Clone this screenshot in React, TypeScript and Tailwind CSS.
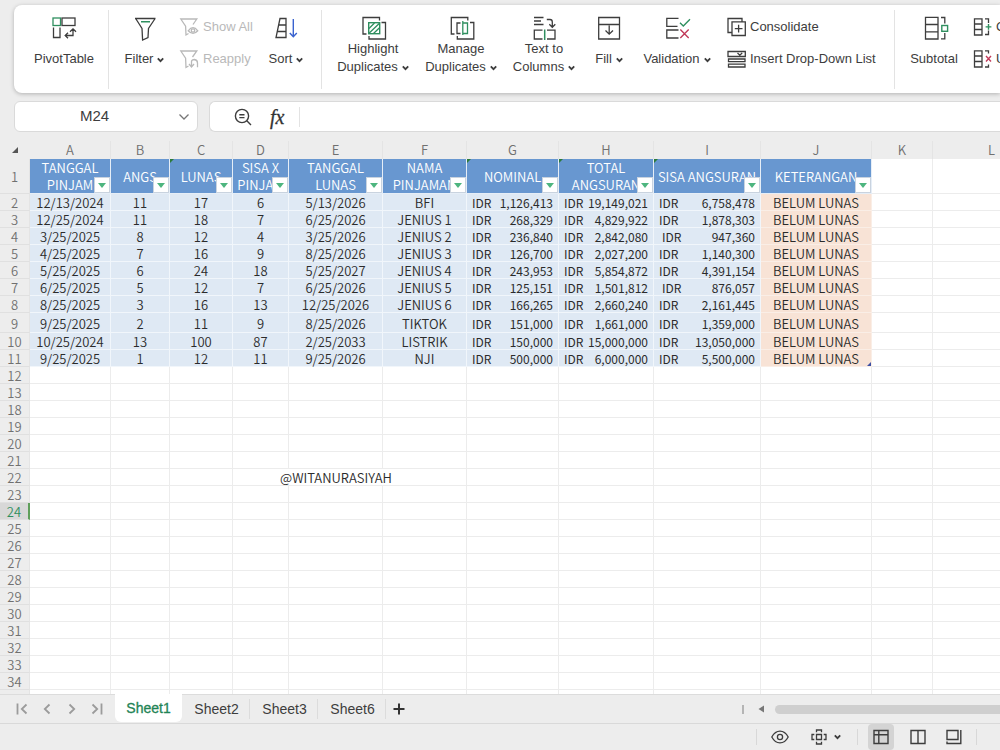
import type { ReactNode } from "react";

const INK = "#3d3d3d";
const GREEN = "#2f8f5f";
const RED = "#c23b5a";

function Icon({ size = 24, children, color = INK }: { size?: number; children: ReactNode; color?: string }) {
  return (
    <svg
      width={size}
      height={size}
      viewBox={`0 0 ${size} ${size}`}
      fill="none"
      stroke={color}
      strokeWidth="1.3"
      className="shrink-0 overflow-visible"
      aria-hidden="true"
    >
      {children}
    </svg>
  );
}

function Caret() {
  return (
    <svg width="7" height="6" viewBox="0 0 7 6" fill="none" stroke={INK} strokeWidth="1.8" className="ml-1 inline-block" aria-hidden="true">
      <path d="M0.8 1.4 3.5 4.2 6.2 1.4" />
    </svg>
  );
}

const PivotIcon = (
  <Icon>
    <rect x="1" y="2" width="7.5" height="7.5" stroke={GREEN} />
    <rect x="10" y="2" width="13" height="7.5" />
    <path d="M1.5 11.5V21.5H8V11.5M21 13.2V19.5H13.5M18 15.8 21 12.8 24 15.8M16 16.8 13.2 19.5 16 22.2" />
  </Icon>
);
const FilterIcon = (
  <Icon>
    <path d="M2 2.5H22.5M3 3 9 12.5 9.6 24 15 21.6 15.5 12.5 21.8 3" />
    <path d="M8 5.8H17" stroke={GREEN} strokeWidth="1.5" />
  </Icon>
);
const ShowAllIcon = (
  <Icon size={20} color="#b9b9b9">
    <path d="M8.5 16.5 6 18 5.6 9.2 0.8 2H16.8L13 7.5" />
    <path d="M8.2 13.8Q13 7.6 17.8 13.8 13 19 8.2 13.8Z" />
    <circle cx="13" cy="13.5" r="1.7" />
  </Icon>
);
const ReapplyIcon = (
  <Icon size={20} color="#b9b9b9">
    <path d="M8.5 17 6 18.5 5.6 9.2 0.8 2H16.8L12.5 8" />
    <path d="M11.5 17.8V12.5Q11.8 10.5 14.5 10.5 17.5 11 17.5 14V18.2M9 15 11.5 18 14 15" />
  </Icon>
);
const SortIcon = (
  <Icon>
    <path d="M6 2.5H12V21.5H2ZM5 9H12M3.5 15.5H12" />
    <path d="M19.3 3V20.5M15.8 17 19.3 20.8 22.8 17" stroke="#3a63cf" strokeWidth="1.4" />
  </Icon>
);
const HighlightIcon = (
  <Icon>
    <path d="M5.5 18H2V1.5H18.5V4.5M20.5 6.5H24.5V23H8V20" />
    <rect x="7.7" y="6.7" width="11" height="11" stroke={GREEN} strokeWidth="1.4" />
    <path d="M8 12.5 13.5 7M8 17.3 18.5 7.2M12.5 17.5 18.5 11.8" stroke={GREEN} />
  </Icon>
);
const ManageIcon = (
  <Icon>
    <path d="M5.5 18H2.3V1.5H18.8V4.5M21 6.5H24.8V23H8.3V20M11.5 7H8V17.5H11.5" />
    <path d="M13.8 5V19M13.8 7H18.5V17.5H13.8" stroke={GREEN} />
  </Icon>
);
const TextColumnsIcon = (
  <Icon>
    <path d="M2 1.5H11.5M2 5H9M2 8.5H11.5M14.8 3.5H18Q20.3 3.5 20.3 6V11M17.3 8.3 20.3 11.3 23.3 8.3M10.5 14.2H2.3V23H10.5M15 14.2H23V23H15" />
    <path d="M12.7 13.5V24" stroke={GREEN} strokeWidth="1.5" />
  </Icon>
);
const FillIcon = (
  <Icon>
    <path d="M1.7 1.5H22.5V8.5H1.7ZM1.7 8.5V23H22.5V8.5M12.2 9.5V18M8.5 14.5 12.2 18.2 16 14.5" />
  </Icon>
);
const ValidationIcon = (
  <Icon>
    <path d="M13.5 2.3H1.8V10.3H12.5M13.5 14H1.8V22H13.5" />
    <path d="M15 6.8 18.3 10 25 3.2" stroke={GREEN} strokeWidth="1.4" />
    <path d="M15.3 13.5 23.7 22M23.7 13.5 15.3 22" stroke={RED} strokeWidth="1.4" />
  </Icon>
);
const ConsolidateIcon = (
  <Icon size={20}>
    <path d="M4.5 15.5H1V1.5H15V4.2M5 4.8H18.3V18.5H5ZM11.6 7.8V15.5M7.8 11.6H15.5" />
  </Icon>
);
const DropListIcon = (
  <Icon size={20}>
    <path d="M1 2.5H18.3V7.5H1ZM10.5 4 12.8 6.2 15.2 4M1.5 10H18V12.6H1.5ZM1.5 15.2H18V18H1.5Z" />
  </Icon>
);
const SubtotalIcon = (
  <Icon>
    <path d="M3.5 1.3H16V23H3.5ZM3.5 8.5H16M3.5 15.8H16M19 1.5H22.8V7.5M19 22.8H22.8V17" />
    <rect x="19.8" y="9.5" width="5.8" height="5.8" stroke={GREEN} strokeWidth="1.4" />
  </Icon>
);
const GroupIcon = (
  <Icon size={20}>
    <path d="M1.5 1.8H9V18H1.5ZM1.5 7H9M1.5 12.5H9M12 1.8H15.5V6M12 17.5H15.5V13.5" />
    <path d="M15.5 7V12.8M12.6 9.9H18.4" stroke={GREEN} strokeWidth="1.4" />
  </Icon>
);
const UngroupIcon = (
  <Icon size={20}>
    <path d="M1.5 1.8H9V18H1.5ZM1.5 7H9M1.5 12.5H9M12 1.8H15.5V4.5M12 18H15.5V15.5" />
    <path d="M13 7 18 12.5M18 7 13 12.5" stroke={RED} strokeWidth="1.4" />
  </Icon>
);

function Tool({ icon, lines, width, caret }: { icon: ReactNode; lines: string[]; width: string; caret?: boolean }) {
  return (
    <button type="button" className={`flex shrink-0 flex-col items-center whitespace-nowrap leading-[18px] ${width} ${lines.length === 1 ? "gap-[10px]" : ""}`}>
      {icon}
      <span>
        {lines.map((line, i) => (
          <span key={line} className="block">
            {line}
            {caret && i === lines.length - 1 && <Caret />}
          </span>
        ))}
      </span>
    </button>
  );
}

function SmallTool({ icon, label, disabled }: { icon: ReactNode; label: string; disabled?: boolean }) {
  return (
    <button type="button" disabled={disabled} className="flex h-[22px] items-center gap-[3px] whitespace-nowrap disabled:text-[#b9b9b9]">
      {icon}
      {label}
    </button>
  );
}

const Divider = () => <div className="-mt-[6px] mb-1 w-px shrink-0 self-stretch bg-[#e3e3e3]" />;

function Ribbon() {
  return (
    <div role="toolbar" aria-label="Data" className="ml-[14px] mt-[5px] flex h-[88px] shrink-0 items-start overflow-hidden rounded-l-lg bg-white pl-[6px] pt-[11px] text-[13px] shadow-[0_1px_4px_rgba(0,0,0,0.25)]">
      <Tool icon={PivotIcon} lines={["PivotTable"]} width="w-[88px]" />
      <Divider />
      <Tool icon={FilterIcon} lines={["Filter"]} width="w-[71px]" caret />
      <div className="flex w-[78px] shrink-0 flex-col gap-[10px]">
        <SmallTool icon={ShowAllIcon} label="Show All" disabled />
        <SmallTool icon={ReapplyIcon} label="Reapply" disabled />
      </div>
      <Tool icon={SortIcon} lines={["Sort"]} width="w-[56px] mr-[7px]" caret />
      <Divider />
      <Tool icon={HighlightIcon} lines={["Highlight", "Duplicates"]} width="w-[88px] ml-[7px]" caret />
      <Tool icon={ManageIcon} lines={["Manage", "Duplicates"]} width="w-[88px]" caret />
      <Tool icon={TextColumnsIcon} lines={["Text to", "Columns"]} width="w-[78px]" caret />
      <Tool icon={FillIcon} lines={["Fill"]} width="w-[52px]" caret />
      <Tool icon={ValidationIcon} lines={["Validation"]} width="w-[84px] mr-2" caret />
      <div className="mr-[7px] flex w-[160px] shrink-0 flex-col gap-[10px]">
        <SmallTool icon={ConsolidateIcon} label="Consolidate" />
        <SmallTool icon={DropListIcon} label="Insert Drop-Down List" />
      </div>
      <Divider />
      <Tool icon={SubtotalIcon} lines={["Subtotal"]} width="w-[78px]" />
      <div className="flex shrink-0 flex-col gap-[10px]">
        <SmallTool icon={GroupIcon} label="Group" />
        <SmallTool icon={UngroupIcon} label="Ungroup" />
      </div>
    </div>
  );
}

function FormulaBar() {
  return (
    <div className="mb-[9px] ml-[14px] mt-2 flex h-[31px] shrink-0 gap-[11px]">
      <div className="flex w-[184px] shrink-0 items-center rounded-md border border-[#dadada] bg-white pr-[7px]">
        <input aria-label="Name box" defaultValue="M24" className="min-w-0 flex-1 pr-1 text-center text-[15px] text-[#3d3d3d] outline-none" />
        <button type="button" aria-label="Open name list">
          <svg width="12" height="8" viewBox="0 0 12 8" fill="none" stroke="#777" strokeWidth="1.3">
            <path d="M1.5 1.5 6 6 10.5 1.5" />
          </svg>
        </button>
      </div>
      <div className="flex min-w-0 flex-1 items-center rounded-l-md border border-r-0 border-[#dadada] bg-white pl-6">
        <button type="button" aria-label="Zoom formula">
          <Icon size={18}>
            <circle cx="8" cy="8" r="6.6" strokeWidth="1.4" />
            <path d="M12.8 12.8 17 17M5.3 6.7H10.5M5.3 9.6H10.5" strokeWidth="1.4" />
          </Icon>
        </button>
        <button type="button" aria-label="Insert function" className="ml-[18px] font-['Liberation_Serif',serif] text-[20px] italic leading-none text-[#333] [-webkit-text-stroke:0.3px_#333]">
          fx
        </button>
        <div className="ml-[15px] h-5 w-px bg-[#e3e3e3]" />
        <input aria-label="Formula" className="h-full min-w-0 flex-1 px-2 text-[13px] outline-none" />
      </div>
    </div>
  );
}

const COLUMNS = ["A", "B", "C", "D", "E", "F", "G", "H", "I", "J", "K", "L"];
const COLUMN_WIDTHS = ["w-[81px]", "w-[59px]", "w-[63px]", "w-[56px]", "w-[94px]", "w-[84px]", "w-[92px]", "w-[95px]", "w-[107px]", "w-[111px]", "w-[61px]", ""];

const HEADERS: { lines: string[]; note?: boolean }[] = [
  { lines: ["TANGGAL", "PINJAM"] },
  { lines: ["ANGS"] },
  { lines: ["LUNAS"], note: true },
  { lines: ["SISA X", "PINJAM"] },
  { lines: ["TANGGAL", "LUNAS"] },
  { lines: ["NAMA", "PINJAMAN"] },
  { lines: ["NOMINAL"], note: true },
  { lines: ["TOTAL", "ANGSURAN"], note: true },
  { lines: ["SISA ANGSURAN"], note: true },
  { lines: ["KETERANGAN"] },
];

const LOANS = [
  ["12/13/2024", "11", "17", "6", "5/13/2026", "BFI", "1,126,413", "19,149,021", "6,758,478"],
  ["12/25/2024", "11", "18", "7", "6/25/2026", "JENIUS 1", "268,329", "4,829,922", "1,878,303"],
  ["3/25/2025", "8", "12", "4", "3/25/2026", "JENIUS 2", "236,840", "2,842,080", "947,360"],
  ["4/25/2025", "7", "16", "9", "8/25/2026", "JENIUS 3", "126,700", "2,027,200", "1,140,300"],
  ["5/25/2025", "6", "24", "18", "5/25/2027", "JENIUS 4", "243,953", "5,854,872", "4,391,154"],
  ["6/25/2025", "5", "12", "7", "6/25/2026", "JENIUS 5", "125,151", "1,501,812", "876,057"],
  ["8/25/2025", "3", "16", "13", "12/25/2026", "JENIUS 6", "166,265", "2,660,240", "2,161,445"],
  ["9/25/2025", "2", "11", "9", "8/25/2026", "TIKTOK", "151,000", "1,661,000", "1,359,000"],
  ["10/25/2024", "13", "100", "87", "2/25/2033", "LISTRIK", "150,000", "15,000,000", "13,050,000"],
  ["9/25/2025", "1", "12", "11", "9/25/2026", "NJI", "500,000", "6,000,000", "5,500,000"],
];

const EMPTY_ROWS = [12, 13, 18, 19, 20, 21, 22, 23, 24, 25, 26, 27, 28, 29, 30, 31, 32, 33, 34];

function RowNumber({ n }: { n?: number }) {
  const look = n === 24 ? "bg-[#d8d8d8] text-[#2f8f5f] border-r-2 border-r-[#5f9f5a]" : "bg-[#ededed] text-[#707070] border-r border-r-[#e4e4e4]";
  return (
    <th scope="row" className={`border-b border-b-[#e0e0e0] p-0 pt-[2px] text-center font-[350] ${look}`}>
      {n}
    </th>
  );
}

function BlankCells({ from, noBorder = [] }: { from: number; noBorder?: string[] }) {
  return (
    <>
      {COLUMNS.slice(from).map((c) => (
        <td key={c} className={`border-b border-[#ececec] p-0 pt-[2px] ${noBorder.includes(c) ? "" : "border-r"}`}>
          {noBorder.length > 0 && c === "E" && (
            <div className="flex justify-center whitespace-nowrap">
              <span>@WITANURASIYAH</span>
            </div>
          )}
        </td>
      ))}
    </>
  );
}

function Sheet() {
  return (
    <div className="min-h-0 flex-1 overflow-hidden bg-white">
      <table className="w-full min-w-[1051px] table-fixed border-separate border-spacing-0 font-['Noto_Sans_CJK_SC',sans-serif] text-[13px] font-[350] leading-[14px] text-[#2b2b2b]">
        <colgroup>
          <col className="w-[30px]" />
          {COLUMNS.map((c, i) => (
            <col key={c} className={COLUMN_WIDTHS[i]} />
          ))}
        </colgroup>
        <thead>
          <tr className="h-[18px] bg-[#ededed] text-[#707070]">
            <td className="p-0">
              <svg width="6" height="6" viewBox="0 0 6 6" className="ml-3" aria-hidden="true">
                <path d="M6 0V6H0Z" fill="#555" />
              </svg>
            </td>
            {COLUMNS.map((c) => (
              <th key={c} scope="col" className="border-r border-[#e4e4e4] p-0 font-[350]">
                {c}
              </th>
            ))}
          </tr>
        </thead>
        <tbody>
          <tr className="h-[35px]">
            <RowNumber n={1} />
            {HEADERS.map((h, i) => (
              <td key={i} className="relative border-b border-r border-[#e6eef7] bg-[#6897d0] p-0 text-center text-white">
                {h.note && <span className="absolute left-0 top-0 h-1 w-1 bg-[#2c7a3a] [clip-path:polygon(0_0,100%_0,0_100%)]" />}
                {h.lines.map((line) => (
                  <span key={line} className="block whitespace-nowrap leading-[17px]">
                    {line}
                  </span>
                ))}
                <button type="button" aria-label={`Filter ${h.lines.join(" ")}`} className="absolute bottom-0 right-0 flex h-4 w-4 items-center justify-center border border-[#c9d3df] bg-white">
                  <svg width="8" height="5" viewBox="0 0 8 5" aria-hidden="true">
                    <path d="M0 0H8L4 5Z" fill="#4db57f" />
                  </svg>
                </button>
              </td>
            ))}
            <BlankCells from={10} />
          </tr>
          {LOANS.map((loan, r) => (
            <tr key={r} className={r === 7 ? "h-[20px]" : "h-[17px]"}>
              <RowNumber n={r + 2} />
              {loan.map((value, i) => (
                <td key={i} className="border-b border-r border-[#f1f6fb] bg-[#dfe9f4] p-0 pt-[2px] text-center">
                  {i < 6 ? (
                    value
                  ) : (
                    <div className={`flex justify-between pr-[5px] text-[12px] font-normal ${i === 8 && value.length === 7 ? "pl-2" : "pl-[5px]"}`}>
                      <span>IDR</span>
                      <span>{value}</span>
                    </div>
                  )}
                </td>
              ))}
              <td className="relative border-b border-r border-[#faeee6] bg-[#f8e3d6] p-0 pt-[2px] text-center">
                BELUM LUNAS
                {r === LOANS.length - 1 && <span className="absolute bottom-0 right-0 h-1 w-1 bg-[#3c4fa3] [clip-path:polygon(100%_0,100%_100%,0_100%)]" />}
              </td>
              <BlankCells from={10} />
            </tr>
          ))}
          {EMPTY_ROWS.map((n) => (
            <tr key={n} className="h-[17px]">
              <RowNumber n={n} />
              <BlankCells from={0} noBorder={n === 22 ? ["D", "E"] : []} />
            </tr>
          ))}
          <tr className="h-[17px]">
            <RowNumber />
            <BlankCells from={0} />
          </tr>
        </tbody>
      </table>
    </div>
  );
}

function NavIcon({ d }: { d: string }) {
  return (
    <svg width="12" height="12" viewBox="0 0 12 12" fill="none" stroke="#9b9b9b" strokeWidth="1.8" aria-hidden="true">
      <path d={d} />
    </svg>
  );
}

const NAV = [
  { label: "First sheet", d: "M1.5 0.5V11.5M10.5 1.5 5.8 6 10.5 10.5" },
  { label: "Previous sheet", d: "M8.5 1.5 3.8 6 8.5 10.5" },
  { label: "Next sheet", d: "M3.5 1.5 8.2 6 3.5 10.5" },
  { label: "Last sheet", d: "M1.5 1.5 6.2 6 1.5 10.5M10.5 0.5V11.5" },
];

function SheetTabs() {
  return (
    <div className="flex h-[29px] shrink-0 items-center border-t border-[#dcdcdc] text-[14px]">
      <nav aria-label="Sheet navigation" className="flex w-[115px] shrink-0 gap-[13px] pl-4">
        {NAV.map((n) => (
          <button key={n.label} type="button" aria-label={n.label}>
            <NavIcon d={n.d} />
          </button>
        ))}
      </nav>
      <div role="tablist" className="flex h-full shrink-0 items-center">
        <button type="button" role="tab" aria-selected="true" className="-mt-px mb-px h-full w-[67px] rounded-b-md bg-white text-[#1f8456] [-webkit-text-stroke:0.3px_#1f8456]">
          Sheet1
        </button>
        {["Sheet2", "Sheet3", "Sheet6"].map((s) => (
          <button key={s} type="button" role="tab" aria-selected="false" className="h-5 w-[68px] border-r border-[#dcdcdc] pl-[2px]">
            {s}
          </button>
        ))}
      </div>
      <button type="button" aria-label="Add sheet" className="ml-[7px]">
        <svg width="12" height="12" viewBox="0 0 12 12" stroke="#333" strokeWidth="2" aria-hidden="true">
          <path d="M6 0.5V11.5M0.5 6H11.5" />
        </svg>
      </button>
      <div className="flex-1" />
      <div className="flex w-[258px] shrink-0 items-center">
        <div className="h-[9px] w-[2px] bg-[#b5b5b5]" />
        <button type="button" aria-label="Scroll left" className="ml-[14px]">
          <svg width="6" height="8" viewBox="0 0 6 8" aria-hidden="true">
            <path d="M6 0.5V7.5L0.5 4Z" fill="#777" />
          </svg>
        </button>
        <div className="ml-[11px] h-[9px] flex-1 rounded-l-full bg-[#cfcfcf]" />
      </div>
    </div>
  );
}

const StatusDivider = ({ gap }: { gap: string }) => <div className={`h-4 w-px shrink-0 bg-[#d8d8d8] ${gap}`} />;

function StatusBar() {
  return (
    <div className="flex h-[27px] shrink-0 items-center justify-end border-t border-[#d9d9d9]">
      <StatusDivider gap="mr-[14px]" />
      <button type="button" aria-label="Reading mode">
        <Icon size={18}>
          <path d="M0.8 9C5 1.2 13 1.2 17.2 9 13 16.8 5 16.8 0.8 9Z" />
          <circle cx="9" cy="9" r="2.6" />
        </Icon>
      </button>
      <button type="button" aria-label="Highlight cell" className="ml-[22px] flex items-center gap-[3px]">
        <Icon size={16}>
          <path d="M5.5 5.5H10.5V10.5H5.5ZM5.5 3.3V1H10.5V3.3M5.5 12.7V15H10.5V12.7M3.3 5.5H1V10.5H3.3M12.7 5.5H15V10.5H12.7" />
        </Icon>
        <Caret />
      </button>
      <StatusDivider gap="ml-4 mr-[10px]" />
      <button type="button" aria-label="Normal view" aria-pressed="true" className="flex h-[26px] w-[26px] items-center justify-center rounded bg-[#d4d4d4]">
        <Icon size={16}>
          <path d="M1 1.5H15V14.5H1ZM1 5.8H15M5.8 1.5V14.5" strokeWidth="1.4" />
        </Icon>
      </button>
      <button type="button" aria-label="Page break preview" className="ml-[16px]">
        <Icon size={16}>
          <path d="M1 1.5H15V14.5H1ZM8 1.5V14.5" strokeWidth="1.4" />
        </Icon>
      </button>
      <button type="button" aria-label="Page layout" className="ml-[20px]">
        <Icon size={16}>
          <path d="M1 1.5H12V10.5H1ZM14.8 1V14.5H1V12.5" strokeWidth="1.4" />
        </Icon>
      </button>
      <StatusDivider gap="ml-[14px] mr-[23px]" />
    </div>
  );
}

export default function App() {
  return (
    <div className="flex h-screen flex-col overflow-hidden bg-[#ededed] font-['Liberation_Sans',Arial,sans-serif] text-[#3d3d3d]">
      <Ribbon />
      <FormulaBar />
      <Sheet />
      <SheetTabs />
      <StatusBar />
    </div>
  );
}
